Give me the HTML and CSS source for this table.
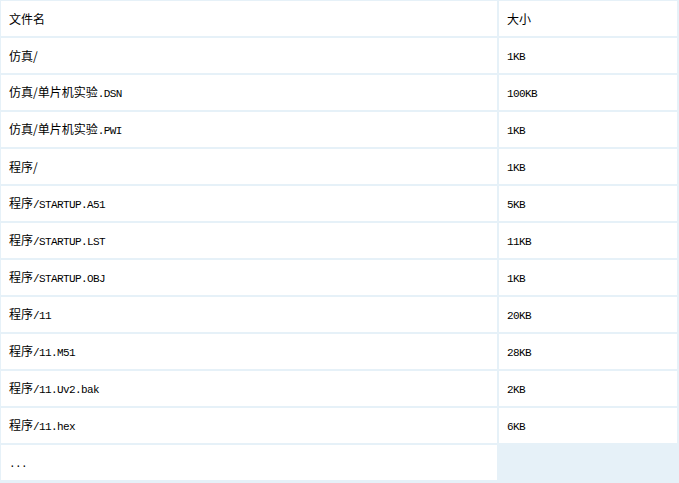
FILE: index.html
```html
<!DOCTYPE html>
<html>
<head>
<meta charset="utf-8">
<link rel="stylesheet" href="styles.css">
</head>
<body>
<table class="files">
  <tr><td class="name">文件名</td><td class="size">大小</td></tr>
  <tr><td class="name">仿真/</td><td class="size"><span class="lat">1KB</span></td></tr>
  <tr><td class="name">仿真/单片机实验<span class="lat">.DSN</span></td><td class="size"><span class="lat">100KB</span></td></tr>
  <tr><td class="name">仿真/单片机实验<span class="lat">.PWI</span></td><td class="size"><span class="lat">1KB</span></td></tr>
  <tr><td class="name">程序/</td><td class="size"><span class="lat">1KB</span></td></tr>
  <tr><td class="name">程序<span class="lat">/STARTUP.A51</span></td><td class="size"><span class="lat">5KB</span></td></tr>
  <tr><td class="name">程序<span class="lat">/STARTUP.LST</span></td><td class="size"><span class="lat">11KB</span></td></tr>
  <tr><td class="name">程序<span class="lat">/STARTUP.OBJ</span></td><td class="size"><span class="lat">1KB</span></td></tr>
  <tr><td class="name">程序<span class="lat">/11</span></td><td class="size"><span class="lat">20KB</span></td></tr>
  <tr><td class="name">程序<span class="lat">/11.M51</span></td><td class="size"><span class="lat">28KB</span></td></tr>
  <tr><td class="name">程序<span class="lat">/11.Uv2.bak</span></td><td class="size"><span class="lat">2KB</span></td></tr>
  <tr><td class="name">程序<span class="lat">/11.hex</span></td><td class="size"><span class="lat">6KB</span></td></tr>
  <tr><td class="name"><span class="lat">...</span></td><td class="size empty"></td></tr>
</table>
</body>
</html>
```
FILE: styles.css
```css
html, body {
  margin: 0;
  padding: 0;
  background: #e6f1f8;
  overflow: hidden;
}
body {
  font-family: "Noto Sans CJK SC", "Liberation Mono", monospace;
  font-size: 12px;
  color: #000;
}
.files {
  margin: -1px 0 0 -1px;
  width: 680px;
  border-collapse: separate;
  border-spacing: 2px;
  table-layout: fixed;
  background: #e6f1f8;
}
.files td {
  background: #fff;
  height: 35px;
  padding: 0 0 0 8px;
  vertical-align: middle;
  box-sizing: border-box;
  white-space: nowrap;
  line-height: 14px;
}
.files td.name {
  width: 496px;
}
.files td.size {
  width: 178px;
}
.files td.empty {
  background: #e6f1f8;
}
.lat {
  font-family: "Liberation Mono", monospace;
  font-size: 11px;
  letter-spacing: -0.6px;
}
```
